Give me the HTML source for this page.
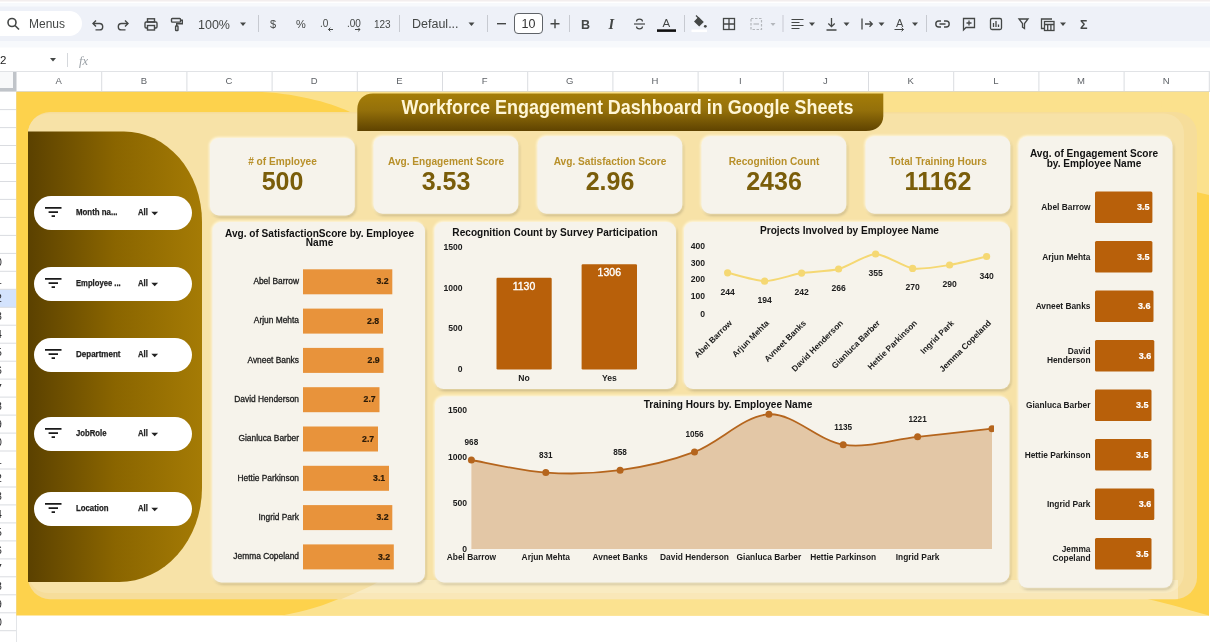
<!DOCTYPE html>
<html><head><meta charset="utf-8"><title>Workforce Engagement Dashboard</title>
<style>
html,body{margin:0;padding:0;background:#fff;}
body{width:1210px;height:642px;overflow:hidden;font-family:"Liberation Sans", Arial, sans-serif;}
svg{display:block;font-family:"Liberation Sans", Arial, sans-serif;will-change:transform;}
text{font-family:"Liberation Sans", Arial, sans-serif;}
.b{font-weight:bold;}
</style></head><body>
<svg width="1210" height="642" viewBox="0 0 1210 642">
<defs>
<linearGradient id="side" x1="0" y1="0" x2="1" y2="0"><stop offset="0" stop-color="#5b4100"/><stop offset="0.5" stop-color="#8a6500"/><stop offset="1" stop-color="#a57b05"/></linearGradient>
<linearGradient id="ttl" x1="0" y1="0" x2="0" y2="1"><stop offset="0" stop-color="#a57d08"/><stop offset="0.45" stop-color="#94700a"/><stop offset="1" stop-color="#5f4300"/></linearGradient>
<filter id="sh" x="-10%" y="-10%" width="120%" height="125%"><feGaussianBlur in="SourceAlpha" stdDeviation="1.800" result="bl"/><feOffset in="bl" dx="1" dy="2" result="o1"/><feComponentTransfer in="o1" result="dark"><feFuncA type="linear" slope="0.200"/></feComponentTransfer><feGaussianBlur in="SourceAlpha" stdDeviation="1" result="b2"/><feOffset in="b2" dx="-1.500" dy="-1" result="o2"/><feFlood flood-color="#fff8e0" result="fl"/><feComposite in="fl" in2="o2" operator="in" result="lite"/><feMerge><feMergeNode in="lite"/><feMergeNode in="dark"/><feMergeNode in="SourceGraphic"/></feMerge></filter>
<clipPath id="cpt"><rect x="460" y="400" width="534" height="170"/></clipPath>
</defs>

<rect x="0" y="0" width="1210" height="642" fill="#fff"/>
<rect x="0" y="0" width="1210" height="1.500" fill="#f3eeee"/>
<rect x="0" y="3" width="1210" height="44.500" fill="#f7f9fc"/>
<rect x="0" y="6.600" width="1210" height="34.400" fill="#eef1f8"/>
<rect x="-20" y="11" width="102" height="25" rx="12.5" fill="#fff"/>
<g fill="none" stroke="#444746" stroke-width="1.6"><circle cx="12" cy="22.5" r="4"/><path d="M15 25.5 L19 29.5"/></g>
<text x="29" y="27.800" font-size="12" fill="#444746">Menus</text>
<g fill="none" stroke="#444746" stroke-width="1.4" transform="translate(0,1)"><path d="M93 22.5h6.5a3.2 3.2 0 0 1 0 6.4h-4"/><path d="M96 19.5l-3 3 3 3"/><path d="M128 22.5h-6.500a3.200 3.200 0 0 0 0 6.400h4"/><path d="M125 19.500l3 3-3 3"/></g>
<g fill="none" stroke="#444746" stroke-width="1.4"><rect x="145" y="22" width="12" height="6" rx="1.2"/><rect x="147.500" y="18.800" width="7" height="3.200"/><rect x="147.500" y="25.500" width="7" height="4.500" fill="#eff2f9"/></g>
<g fill="none" stroke="#444746" stroke-width="1.4"><rect x="171.500" y="18.500" width="9" height="3.600" rx="0.800"/><path d="M180.500 20.300h1.800v3.400h-5.600v2.300"/><rect x="175.600" y="26" width="2.400" height="4.500" rx="0.600"/></g>
<text x="198" y="28.500" font-size="12.500" fill="#444746">100%</text>
<path d="M240 22.500h6l-3 3.500z" fill="#444746"/>
<rect x="258" y="15" width="1" height="17" fill="#c7cad1"/>
<text x="270" y="27.500" font-size="11" fill="#444746">$</text>
<text x="296" y="27.500" font-size="11" fill="#444746">%</text>
<text x="320" y="26.500" font-size="10" fill="#444746">.0</text><path d="M333 29.500h-4.500m1.800 -1.800l-1.800 1.800 1.800 1.800" stroke="#444746" stroke-width="1" fill="none"/>
<text x="347" y="26.500" font-size="10" fill="#444746">.00</text><path d="M355 29.500h5m-1.800 -1.800l1.800 1.800 -1.800 1.800" stroke="#444746" stroke-width="1" fill="none"/>
<text x="374" y="27.500" font-size="10" fill="#444746">123</text>
<rect x="399" y="15" width="1" height="17" fill="#c7cad1"/>
<text x="412" y="28" font-size="12.500" fill="#444746">Defaul...</text>
<path d="M468.500 22.500h6l-3 3.500z" fill="#444746"/>
<rect x="487" y="15" width="1" height="17" fill="#c7cad1"/>
<rect x="497" y="23" width="9" height="1.400" fill="#444746"/>
<rect x="514.500" y="13.500" width="28" height="20" rx="3.500" fill="#fff" stroke="#5f6368" stroke-width="1"/>
<text x="528.500" y="28" font-size="12.500" fill="#333" text-anchor="middle">10</text>
<path d="M550.500 23.700h9M555 19.200v9" stroke="#444746" stroke-width="1.400"/>
<rect x="569" y="15" width="1" height="17" fill="#c7cad1"/>
<text x="581" y="28.500" font-size="12.500" font-weight="bold" fill="#444746">B</text>
<text x="608.500" y="29" font-size="14.500" style="font-family:Liberation Serif,serif;font-style:italic;font-weight:bold" fill="#444746">I</text>
<g fill="none" stroke="#444746" stroke-width="1.200"><path d="M634 24h11"/><path d="M642.500 21.500a3 2.300 0 0 0 -6 0M636.500 26.500a3 2.300 0 0 0 6 0"/></g>
<text x="662.500" y="26.500" font-size="11.500" fill="#444746">A</text><rect x="657" y="29.300" width="19" height="2.600" fill="#111"/>
<rect x="684" y="15" width="1" height="17" fill="#c7cad1"/>
<path d="M698 16.200l5.800 5.800-4.600 4.600-5.200-5.200 4.600-4.600z" fill="#444746"/><path d="M696 15.500l2.500 2.500" stroke="#444746" stroke-width="1.300"/><circle cx="705.300" cy="26.300" r="1.400" fill="#444746"/><rect x="691.500" y="29.500" width="15.500" height="2.600" fill="#fff"/>
<g fill="none" stroke="#444746" stroke-width="1.300"><rect x="723.500" y="18.500" width="11" height="11"/><path d="M729 18.500v11M723.500 24h11"/></g>
<g fill="none" stroke="#b4b7bc" stroke-width="1.200"><rect x="751" y="18.500" width="10.500" height="11" stroke-dasharray="2.500 1.500"/><path d="M753.500 24h5.500"/></g><path d="M770.500 23h5l-2.500 3z" fill="#b4b7bc"/>
<rect x="782.500" y="15" width="1" height="17" fill="#c7cad1"/>
<path d="M791.500 19.500h12M791.500 22.500h8M791.500 25.500h12M791.500 28.500h8" stroke="#444746" stroke-width="1.200"/><path d="M809 22.500h6l-3 3.500z" fill="#444746"/>
<path d="M831.500 18v8.500M828.300 23.500l3.200 3.200 3.200-3.200M826.500 30h10" stroke="#444746" stroke-width="1.300" fill="none"/><path d="M843.500 22.500h6l-3 3.500z" fill="#444746"/>
<path d="M862 18.500v11M865 24h7M869.500 21.200l2.800 2.800-2.800 2.800" stroke="#444746" stroke-width="1.300" fill="none"/><path d="M878.500 22.500h6l-3 3.500z" fill="#444746"/>
<text x="896" y="27" font-size="11" fill="#444746">A</text><path d="M894.500 29.500h9m-2-1.800l2 1.800-2 1.800" stroke="#444746" stroke-width="1" fill="none"/><path d="M912 22.500h6l-3 3.500z" fill="#444746"/>
<rect x="926" y="15" width="1" height="17" fill="#c7cad1"/>
<g fill="none" stroke="#444746" stroke-width="1.400"><path d="M941 21h-2.200a3 3 0 0 0 0 6h2.200M944 21h2.200a3 3 0 0 1 0 6h-2.200M939.500 24h6"/></g>
<g fill="none" stroke="#444746" stroke-width="1.300"><path d="M963.500 18.500h11v9h-8.500l-2.500 2.500z"/><path d="M969 20.500v5M966.500 23h5"/></g>
<g fill="none" stroke="#444746" stroke-width="1.300"><rect x="990.500" y="18.500" width="11" height="11" rx="1.500"/><path d="M993.500 27v-4M996 27v-6M998.500 27v-2.500"/></g>
<path d="M1019 19h9l-3.500 4.500v5l-2 -1.300v-3.700z" fill="none" stroke="#444746" stroke-width="1.300"/>
<g fill="none" stroke="#444746" stroke-width="1.300"><path d="M1052 19h-10.500v9.500h3"/><rect x="1044.500" y="21.500" width="9.500" height="9"/><path d="M1044.500 24.500h9.500M1047.700 24.500v6M1050.900 24.500v6"/></g><path d="M1060 22.500h6l-3 3.500z" fill="#444746"/>
<text x="1080" y="28.500" font-size="12.500" font-weight="bold" fill="#444746">Σ</text>
<text x="0" y="63.500" font-size="11.500" fill="#222">2</text>
<path d="M50 58h6l-3 3.500z" fill="#444746"/>
<rect x="67" y="53" width="1" height="14" fill="#d5d8dc"/>
<text x="79" y="64.500" font-size="12.500" style="font-family:Liberation Serif,serif;font-style:italic" fill="#9aa0a6">fx</text>
<rect x="0" y="71" width="1210" height="1" fill="#e1e3e6"/>
<rect x="0" y="72" width="1210" height="19" fill="#fff"/>
<rect x="0" y="72" width="16" height="19" fill="#f8f9fa"/><rect x="13" y="72" width="3.500" height="19" fill="#c0c4c9"/><rect x="0" y="88" width="16" height="3.500" fill="#c0c4c9"/>
<rect x="0" y="91" width="1210" height="1" fill="#d9dbde"/>
<rect x="101.2" y="72" width="1" height="19" fill="#dadce0"/>
<text x="58.6" y="84.300" font-size="9.500" fill="#5f6368" text-anchor="middle">A</text>
<rect x="186.4" y="72" width="1" height="19" fill="#dadce0"/>
<text x="143.8" y="84.300" font-size="9.500" fill="#5f6368" text-anchor="middle">B</text>
<rect x="271.6" y="72" width="1" height="19" fill="#dadce0"/>
<text x="229.0" y="84.300" font-size="9.500" fill="#5f6368" text-anchor="middle">C</text>
<rect x="356.8" y="72" width="1" height="19" fill="#dadce0"/>
<text x="314.2" y="84.300" font-size="9.500" fill="#5f6368" text-anchor="middle">D</text>
<rect x="442.0" y="72" width="1" height="19" fill="#dadce0"/>
<text x="399.4" y="84.300" font-size="9.500" fill="#5f6368" text-anchor="middle">E</text>
<rect x="527.2" y="72" width="1" height="19" fill="#dadce0"/>
<text x="484.6" y="84.300" font-size="9.500" fill="#5f6368" text-anchor="middle">F</text>
<rect x="612.4" y="72" width="1" height="19" fill="#dadce0"/>
<text x="569.8" y="84.300" font-size="9.500" fill="#5f6368" text-anchor="middle">G</text>
<rect x="697.6" y="72" width="1" height="19" fill="#dadce0"/>
<text x="655.0" y="84.300" font-size="9.500" fill="#5f6368" text-anchor="middle">H</text>
<rect x="782.8" y="72" width="1" height="19" fill="#dadce0"/>
<text x="740.2" y="84.300" font-size="9.500" fill="#5f6368" text-anchor="middle">I</text>
<rect x="868.0" y="72" width="1" height="19" fill="#dadce0"/>
<text x="825.4" y="84.300" font-size="9.500" fill="#5f6368" text-anchor="middle">J</text>
<rect x="953.2" y="72" width="1" height="19" fill="#dadce0"/>
<text x="910.6" y="84.300" font-size="9.500" fill="#5f6368" text-anchor="middle">K</text>
<rect x="1038.4" y="72" width="1" height="19" fill="#dadce0"/>
<text x="995.8" y="84.300" font-size="9.500" fill="#5f6368" text-anchor="middle">L</text>
<rect x="1123.6" y="72" width="1" height="19" fill="#dadce0"/>
<text x="1081.0" y="84.300" font-size="9.500" fill="#5f6368" text-anchor="middle">M</text>
<rect x="1208.8" y="72" width="1" height="19" fill="#dadce0"/>
<text x="1166.2" y="84.300" font-size="9.500" fill="#5f6368" text-anchor="middle">N</text>
<rect x="0" y="92" width="16" height="550" fill="#fff"/>
<rect x="16" y="92" width="1" height="550" fill="#e3e5e8"/>
<rect x="0" y="289.300" width="16" height="18" fill="#d3e3fd"/>
<rect x="0" y="109.1" width="16" height="1" fill="#dadce0"/>
<rect x="0" y="127.1" width="16" height="1" fill="#dadce0"/>
<rect x="0" y="145.0" width="16" height="1" fill="#dadce0"/>
<rect x="0" y="163.0" width="16" height="1" fill="#dadce0"/>
<rect x="0" y="181.0" width="16" height="1" fill="#dadce0"/>
<rect x="0" y="198.9" width="16" height="1" fill="#dadce0"/>
<rect x="0" y="216.9" width="16" height="1" fill="#dadce0"/>
<rect x="0" y="234.9" width="16" height="1" fill="#dadce0"/>
<rect x="0" y="252.9" width="16" height="1" fill="#dadce0"/>
<rect x="0" y="270.8" width="16" height="1" fill="#dadce0"/>
<rect x="0" y="288.8" width="16" height="1" fill="#dadce0"/>
<rect x="0" y="306.8" width="16" height="1" fill="#dadce0"/>
<rect x="0" y="324.7" width="16" height="1" fill="#dadce0"/>
<rect x="0" y="342.7" width="16" height="1" fill="#dadce0"/>
<rect x="0" y="360.7" width="16" height="1" fill="#dadce0"/>
<rect x="0" y="378.6" width="16" height="1" fill="#dadce0"/>
<rect x="0" y="396.6" width="16" height="1" fill="#dadce0"/>
<rect x="0" y="414.6" width="16" height="1" fill="#dadce0"/>
<rect x="0" y="432.6" width="16" height="1" fill="#dadce0"/>
<rect x="0" y="450.5" width="16" height="1" fill="#dadce0"/>
<rect x="0" y="468.5" width="16" height="1" fill="#dadce0"/>
<rect x="0" y="486.5" width="16" height="1" fill="#dadce0"/>
<rect x="0" y="504.4" width="16" height="1" fill="#dadce0"/>
<rect x="0" y="522.4" width="16" height="1" fill="#dadce0"/>
<rect x="0" y="540.4" width="16" height="1" fill="#dadce0"/>
<rect x="0" y="558.4" width="16" height="1" fill="#dadce0"/>
<rect x="0" y="576.3" width="16" height="1" fill="#dadce0"/>
<rect x="0" y="594.3" width="16" height="1" fill="#dadce0"/>
<rect x="0" y="612.3" width="16" height="1" fill="#dadce0"/>
<rect x="0" y="630.2" width="16" height="1" fill="#dadce0"/>
<rect x="0" y="648.2" width="16" height="1" fill="#dadce0"/>
<text x="-3.800" y="266.3" font-size="10" fill="#202124">0</text>
<text x="-3.800" y="284.3" font-size="10" fill="#202124">1</text>
<text x="-3.800" y="302.3" font-size="10" fill="#202124">2</text>
<text x="-3.800" y="320.2" font-size="10" fill="#202124">3</text>
<text x="-3.800" y="338.2" font-size="10" fill="#202124">4</text>
<text x="-3.800" y="356.2" font-size="10" fill="#202124">5</text>
<text x="-3.800" y="374.1" font-size="10" fill="#202124">6</text>
<text x="-3.800" y="392.1" font-size="10" fill="#202124">7</text>
<text x="-3.800" y="410.1" font-size="10" fill="#202124">8</text>
<text x="-3.800" y="428.1" font-size="10" fill="#202124">9</text>
<text x="-3.800" y="446.0" font-size="10" fill="#202124">0</text>
<text x="-3.800" y="464.0" font-size="10" fill="#202124">1</text>
<text x="-3.800" y="482.0" font-size="10" fill="#202124">2</text>
<text x="-3.800" y="499.9" font-size="10" fill="#202124">3</text>
<text x="-3.800" y="517.9" font-size="10" fill="#202124">4</text>
<text x="-3.800" y="535.9" font-size="10" fill="#202124">5</text>
<text x="-3.800" y="553.9" font-size="10" fill="#202124">6</text>
<text x="-3.800" y="571.8" font-size="10" fill="#202124">7</text>
<text x="-3.800" y="589.8" font-size="10" fill="#202124">8</text>
<text x="-3.800" y="607.8" font-size="10" fill="#202124">9</text>
<text x="-3.800" y="625.7" font-size="10" fill="#202124">0</text>
<rect x="16.300" y="91.800" width="1192.700" height="523.700" fill="#fdd24c"/>
<path d="M262 92 C300 94 335 104 352 113 L1209 113 L1209 92 Z" fill="#fbe18d"/>
<path d="M1160 92 L1209 92 L1209 195 C1198 192 1186 190 1172 190 Z" fill="#fbe18d"/>
<path d="M282 615.500 C305 611 325 605.500 343 597 L1209 597 L1209 615.500 Z" fill="#fbe290"/>
<path d="M1138 597 C1160 601 1185 609 1209 615.500 L1209 597 Z" fill="#fdd24c"/>
<rect x="28" y="112" width="1169" height="487.200" rx="22" fill="#f6dd9a"/>
<rect x="28" y="113.500" width="1156" height="479.500" rx="20" fill="#f7e2a7"/>
<path d="M341 599.200 C355 593 368 588 382 580 L1178 580 L1178 599.200 Z" fill="#fff" fill-opacity="0.300"/>
<path d="M28 131.500 L124 131.500 A78 90 0 0 1 202 221.500 L202 488 A83 94 0 0 1 119 582 L28 582 Z" fill="url(#side)"/>
<rect x="34" y="196" width="158" height="34" rx="17" fill="#fff"/>
<path d="M45 207.9h16.500M48.600 212.1h9.400M51.600 216.2h3.400" stroke="#1a1a1a" stroke-width="1.800" fill="none"/>
<text x="76" y="214.6" font-size="8.800" class="b" fill="#222" stroke="#222" stroke-width="0.250" textLength="41.5" lengthAdjust="spacingAndGlyphs">Month na...</text>
<text x="138" y="214.6" font-size="8.800" class="b" fill="#222" stroke="#222" stroke-width="0.250" textLength="9.800" lengthAdjust="spacingAndGlyphs">All</text>
<path d="M151.300 211.7h6.800l-3.400 3.600z" fill="#222"/>
<rect x="34" y="267" width="158" height="34" rx="17" fill="#fff"/>
<path d="M45 278.9h16.500M48.600 283.1h9.400M51.600 287.2h3.400" stroke="#1a1a1a" stroke-width="1.800" fill="none"/>
<text x="76" y="285.6" font-size="8.800" class="b" fill="#222" stroke="#222" stroke-width="0.250" textLength="44.7" lengthAdjust="spacingAndGlyphs">Employee ...</text>
<text x="138" y="285.6" font-size="8.800" class="b" fill="#222" stroke="#222" stroke-width="0.250" textLength="9.800" lengthAdjust="spacingAndGlyphs">All</text>
<path d="M151.300 282.7h6.800l-3.400 3.600z" fill="#222"/>
<rect x="34" y="338" width="158" height="34" rx="17" fill="#fff"/>
<path d="M45 349.9h16.500M48.600 354.1h9.400M51.600 358.2h3.400" stroke="#1a1a1a" stroke-width="1.800" fill="none"/>
<text x="76" y="356.6" font-size="8.800" class="b" fill="#222" stroke="#222" stroke-width="0.250" textLength="44.5" lengthAdjust="spacingAndGlyphs">Department</text>
<text x="138" y="356.6" font-size="8.800" class="b" fill="#222" stroke="#222" stroke-width="0.250" textLength="9.800" lengthAdjust="spacingAndGlyphs">All</text>
<path d="M151.300 353.7h6.800l-3.400 3.600z" fill="#222"/>
<rect x="34" y="417" width="158" height="34" rx="17" fill="#fff"/>
<path d="M45 428.9h16.500M48.600 433.1h9.400M51.600 437.2h3.400" stroke="#1a1a1a" stroke-width="1.800" fill="none"/>
<text x="76" y="435.6" font-size="8.800" class="b" fill="#222" stroke="#222" stroke-width="0.250" textLength="30.5" lengthAdjust="spacingAndGlyphs">JobRole</text>
<text x="138" y="435.6" font-size="8.800" class="b" fill="#222" stroke="#222" stroke-width="0.250" textLength="9.800" lengthAdjust="spacingAndGlyphs">All</text>
<path d="M151.300 432.7h6.800l-3.400 3.600z" fill="#222"/>
<rect x="34" y="492" width="158" height="34" rx="17" fill="#fff"/>
<path d="M45 503.9h16.500M48.600 508.1h9.400M51.600 512.2h3.400" stroke="#1a1a1a" stroke-width="1.800" fill="none"/>
<text x="76" y="510.6" font-size="8.800" class="b" fill="#222" stroke="#222" stroke-width="0.250" textLength="32.5" lengthAdjust="spacingAndGlyphs">Location</text>
<text x="138" y="510.6" font-size="8.800" class="b" fill="#222" stroke="#222" stroke-width="0.250" textLength="9.800" lengthAdjust="spacingAndGlyphs">All</text>
<path d="M151.300 507.7h6.800l-3.400 3.600z" fill="#222"/>
<path d="M373 93.400 L883.300 93.400 L883.300 116 C883.300 125 876 131 866 131 L357.300 131 L357.300 109 C357.300 99.500 364 93.400 373 93.400 Z" fill="url(#ttl)"/>
<text x="627.500" y="114.400" font-size="21" class="b" fill="#fff6d6" text-anchor="middle" textLength="452" lengthAdjust="spacingAndGlyphs">Workforce Engagement Dashboard in Google Sheets</text>
<rect x="210.0" y="138.0" width="144.800" height="77.400" rx="9" fill="#f6f3eb" filter="url(#sh)"/>
<text x="282.5" y="164.800" font-size="10.150" class="b" fill="#b8902a" text-anchor="middle"># of Employee</text>
<text x="282.5" y="189.800" font-size="25" class="b" fill="#7a5d0a" text-anchor="middle">500</text>
<rect x="373.5" y="136.3" width="144.800" height="77.400" rx="9" fill="#f6f3eb" filter="url(#sh)"/>
<text x="446.0" y="164.800" font-size="10.150" class="b" fill="#b8902a" text-anchor="middle">Avg. Engagement Score</text>
<text x="446.0" y="189.800" font-size="25" class="b" fill="#7a5d0a" text-anchor="middle">3.53</text>
<rect x="537.5" y="136.3" width="144.800" height="77.400" rx="9" fill="#f6f3eb" filter="url(#sh)"/>
<text x="610.0" y="164.800" font-size="10.150" class="b" fill="#b8902a" text-anchor="middle">Avg. Satisfaction Score</text>
<text x="610.0" y="189.800" font-size="25" class="b" fill="#7a5d0a" text-anchor="middle">2.96</text>
<rect x="701.5" y="136.3" width="144.800" height="77.400" rx="9" fill="#f6f3eb" filter="url(#sh)"/>
<text x="774.0" y="164.800" font-size="10.150" class="b" fill="#b8902a" text-anchor="middle">Recognition Count</text>
<text x="774.0" y="189.800" font-size="25" class="b" fill="#7a5d0a" text-anchor="middle">2436</text>
<rect x="865.5" y="136.3" width="144.800" height="77.400" rx="9" fill="#f6f3eb" filter="url(#sh)"/>
<text x="938.0" y="164.800" font-size="10.150" class="b" fill="#b8902a" text-anchor="middle">Total Training Hours</text>
<text x="938.0" y="189.800" font-size="25" class="b" fill="#7a5d0a" text-anchor="middle">11162</text>
<rect x="212.500" y="222" width="212.500" height="360.500" rx="9" fill="#f6f3eb" filter="url(#sh)"/>
<text x="319.500" y="236.800" font-size="10.100" class="b" fill="#111" text-anchor="middle">Avg. of SatisfactionScore by. Employee</text>
<text x="319.500" y="246.300" font-size="10.100" class="b" fill="#111" text-anchor="middle">Name</text>
<rect x="303" y="269.3" width="89.3" height="25" fill="#e8933b"/>
<text x="299" y="284.0" font-size="8.400" fill="#1c1c1c" text-anchor="end" stroke="#1c1c1c" stroke-width="0.300">Abel Barrow</text>
<text x="388.5" y="284.4" font-size="8.700" class="b" fill="#2a1a08" stroke="#2a1a08" stroke-width="0.200" text-anchor="end">3.2</text>
<rect x="303" y="308.6" width="80.0" height="25" fill="#e8933b"/>
<text x="299" y="323.3" font-size="8.400" fill="#1c1c1c" text-anchor="end" stroke="#1c1c1c" stroke-width="0.300">Arjun Mehta</text>
<text x="379.2" y="323.7" font-size="8.700" class="b" fill="#2a1a08" stroke="#2a1a08" stroke-width="0.200" text-anchor="end">2.8</text>
<rect x="303" y="347.9" width="80.5" height="25" fill="#e8933b"/>
<text x="299" y="362.6" font-size="8.400" fill="#1c1c1c" text-anchor="end" stroke="#1c1c1c" stroke-width="0.300">Avneet Banks</text>
<text x="379.7" y="363.0" font-size="8.700" class="b" fill="#2a1a08" stroke="#2a1a08" stroke-width="0.200" text-anchor="end">2.9</text>
<rect x="303" y="387.2" width="76.5" height="25" fill="#e8933b"/>
<text x="299" y="401.9" font-size="8.400" fill="#1c1c1c" text-anchor="end" stroke="#1c1c1c" stroke-width="0.300">David Henderson</text>
<text x="375.7" y="402.3" font-size="8.700" class="b" fill="#2a1a08" stroke="#2a1a08" stroke-width="0.200" text-anchor="end">2.7</text>
<rect x="303" y="426.5" width="75.0" height="25" fill="#e8933b"/>
<text x="299" y="441.2" font-size="8.400" fill="#1c1c1c" text-anchor="end" stroke="#1c1c1c" stroke-width="0.300">Gianluca Barber</text>
<text x="374.2" y="441.6" font-size="8.700" class="b" fill="#2a1a08" stroke="#2a1a08" stroke-width="0.200" text-anchor="end">2.7</text>
<rect x="303" y="465.8" width="86.0" height="25" fill="#e8933b"/>
<text x="299" y="480.5" font-size="8.400" fill="#1c1c1c" text-anchor="end" stroke="#1c1c1c" stroke-width="0.300">Hettie Parkinson</text>
<text x="385.2" y="480.9" font-size="8.700" class="b" fill="#2a1a08" stroke="#2a1a08" stroke-width="0.200" text-anchor="end">3.1</text>
<rect x="303" y="505.1" width="89.3" height="25" fill="#e8933b"/>
<text x="299" y="519.8" font-size="8.400" fill="#1c1c1c" text-anchor="end" stroke="#1c1c1c" stroke-width="0.300">Ingrid Park</text>
<text x="388.5" y="520.2" font-size="8.700" class="b" fill="#2a1a08" stroke="#2a1a08" stroke-width="0.200" text-anchor="end">3.2</text>
<rect x="303" y="544.4" width="90.8" height="25" fill="#e8933b"/>
<text x="299" y="559.1" font-size="8.400" fill="#1c1c1c" text-anchor="end" stroke="#1c1c1c" stroke-width="0.300">Jemma Copeland</text>
<text x="390.0" y="559.5" font-size="8.700" class="b" fill="#2a1a08" stroke="#2a1a08" stroke-width="0.200" text-anchor="end">3.2</text>
<rect x="434.500" y="222" width="241.500" height="167" rx="9" fill="#f6f3eb" filter="url(#sh)"/>
<text x="555" y="235.800" font-size="10.100" class="b" fill="#111" text-anchor="middle">Recognition Count by Survey Participation</text>
<text x="462.500" y="250.1" font-size="8.600" class="b" fill="#1c1c1c" text-anchor="end">1500</text>
<text x="462.500" y="291.0" font-size="8.600" class="b" fill="#1c1c1c" text-anchor="end">1000</text>
<text x="462.500" y="331.0" font-size="8.600" class="b" fill="#1c1c1c" text-anchor="end">500</text>
<text x="462.500" y="371.5" font-size="8.600" class="b" fill="#1c1c1c" text-anchor="end">0</text>
<rect x="496.500" y="277.800" width="55.200" height="91.600" rx="1.200" fill="#b8600a"/>
<rect x="581.600" y="264.200" width="55.400" height="105.200" rx="1.200" fill="#b8600a"/>
<text x="524" y="289.500" font-size="10.500" fill="#fff" stroke="#fff" stroke-width="0.350" text-anchor="middle">1130</text>
<text x="609.300" y="275.600" font-size="10.500" fill="#fff" stroke="#fff" stroke-width="0.350" text-anchor="middle">1306</text>
<text x="524" y="381" font-size="8.600" class="b" fill="#1c1c1c" text-anchor="middle">No</text>
<text x="609.300" y="381" font-size="8.600" class="b" fill="#1c1c1c" text-anchor="middle">Yes</text>
<rect x="684" y="222" width="326" height="167" rx="9" fill="#f6f3eb" filter="url(#sh)"/>
<text x="849.500" y="234.300" font-size="10.100" class="b" fill="#111" text-anchor="middle">Projects Involved by Employee Name</text>
<text x="705" y="248.9" font-size="8.600" class="b" fill="#1c1c1c" text-anchor="end">400</text>
<text x="705" y="265.5" font-size="8.600" class="b" fill="#1c1c1c" text-anchor="end">300</text>
<text x="705" y="282.3" font-size="8.600" class="b" fill="#1c1c1c" text-anchor="end">200</text>
<text x="705" y="299.4" font-size="8.600" class="b" fill="#1c1c1c" text-anchor="end">100</text>
<text x="705" y="316.5" font-size="8.600" class="b" fill="#1c1c1c" text-anchor="end">0</text>
<path d="M727.6,272.8 C731.9,273.7 756.0,281.2 764.6,281.2 C773.2,281.3 793.0,274.5 801.6,273.1 C810.2,271.7 830.0,271.3 838.6,269.0 C847.2,266.8 867.0,254.1 875.6,254.0 C884.2,253.9 904.0,267.1 912.6,268.4 C921.2,269.7 941.0,266.4 949.6,265.0 C958.2,263.6 982.3,257.5 986.6,256.5" fill="none" stroke="#f5d873" stroke-width="2"/>
<circle cx="727.6" cy="272.8" r="3.600" fill="#f5d873"/>
<text x="727.6" y="294.8" font-size="8.600" class="b" fill="#1c1c1c" text-anchor="middle">244</text>
<text transform="translate(732.6,323.6) rotate(-45)" font-size="8.350" class="b" fill="#1c1c1c" text-anchor="end">Abel Barrow</text>
<circle cx="764.6" cy="281.2" r="3.600" fill="#f5d873"/>
<text x="764.6" y="303.2" font-size="8.600" class="b" fill="#1c1c1c" text-anchor="middle">194</text>
<text transform="translate(769.6,323.6) rotate(-45)" font-size="8.350" class="b" fill="#1c1c1c" text-anchor="end">Arjun Mehta</text>
<circle cx="801.6" cy="273.1" r="3.600" fill="#f5d873"/>
<text x="801.6" y="295.1" font-size="8.600" class="b" fill="#1c1c1c" text-anchor="middle">242</text>
<text transform="translate(806.6,323.6) rotate(-45)" font-size="8.350" class="b" fill="#1c1c1c" text-anchor="end">Avneet Banks</text>
<circle cx="838.6" cy="269.0" r="3.600" fill="#f5d873"/>
<text x="838.6" y="291.0" font-size="8.600" class="b" fill="#1c1c1c" text-anchor="middle">266</text>
<text transform="translate(843.6,323.6) rotate(-45)" font-size="8.350" class="b" fill="#1c1c1c" text-anchor="end">David Henderson</text>
<circle cx="875.6" cy="254.0" r="3.600" fill="#f5d873"/>
<text x="875.6" y="276.0" font-size="8.600" class="b" fill="#1c1c1c" text-anchor="middle">355</text>
<text transform="translate(880.6,323.6) rotate(-45)" font-size="8.350" class="b" fill="#1c1c1c" text-anchor="end">Gianluca Barber</text>
<circle cx="912.6" cy="268.4" r="3.600" fill="#f5d873"/>
<text x="912.6" y="290.4" font-size="8.600" class="b" fill="#1c1c1c" text-anchor="middle">270</text>
<text transform="translate(917.6,323.6) rotate(-45)" font-size="8.350" class="b" fill="#1c1c1c" text-anchor="end">Hettie Parkinson</text>
<circle cx="949.6" cy="265.0" r="3.600" fill="#f5d873"/>
<text x="949.6" y="287.0" font-size="8.600" class="b" fill="#1c1c1c" text-anchor="middle">290</text>
<text transform="translate(954.6,323.6) rotate(-45)" font-size="8.350" class="b" fill="#1c1c1c" text-anchor="end">Ingrid Park</text>
<circle cx="986.6" cy="256.5" r="3.600" fill="#f5d873"/>
<text x="986.6" y="278.5" font-size="8.600" class="b" fill="#1c1c1c" text-anchor="middle">340</text>
<text transform="translate(991.6,323.6) rotate(-45)" font-size="8.350" class="b" fill="#1c1c1c" text-anchor="end">Jemma Copeland</text>
<rect x="435" y="396.500" width="574.500" height="186" rx="9" fill="#f6f3eb" filter="url(#sh)"/>
<text x="728" y="407.500" font-size="10.100" class="b" fill="#111" text-anchor="middle">Training Hours by. Employee Name</text>
<text x="467" y="413.1" font-size="8.600" class="b" fill="#1c1c1c" text-anchor="end">1500</text>
<text x="467" y="459.7" font-size="8.600" class="b" fill="#1c1c1c" text-anchor="end">1000</text>
<text x="467" y="505.8" font-size="8.600" class="b" fill="#1c1c1c" text-anchor="end">500</text>
<text x="467" y="552.4" font-size="8.600" class="b" fill="#1c1c1c" text-anchor="end">0</text>
<path d="M471.4,460.0 C483.8,462.1 521.0,471.0 545.8,472.6 C570.6,474.3 595.4,473.6 620.1,470.2 C644.9,466.7 669.7,461.3 694.5,451.9 C719.3,442.6 744.1,415.5 768.9,414.3 C793.7,413.1 818.5,440.9 843.2,444.7 C868.0,448.4 892.8,439.4 917.6,436.8 C942.4,434.1 979.6,430.0 992.0,428.7 L992,549.100 L471.400,549.100 Z" fill="#e3c7a6"/>
<path d="M471.4,460.0 C483.8,462.1 521.0,471.0 545.8,472.6 C570.6,474.3 595.4,473.6 620.1,470.2 C644.9,466.7 669.7,461.3 694.5,451.9 C719.3,442.6 744.1,415.5 768.9,414.3 C793.7,413.1 818.5,440.9 843.2,444.7 C868.0,448.4 892.8,439.4 917.6,436.8 C942.4,434.1 979.6,430.0 992.0,428.7" fill="none" stroke="#b5651d" stroke-width="1.800"/>
<circle cx="471.4" cy="460.0" r="3.500" fill="#b5651d" clip-path="url(#cpt)"/>
<text x="471.4" y="445.0" font-size="8.200" class="b" fill="#1c1c1c" text-anchor="middle">968</text>
<text x="471.4" y="560.3" font-size="8.400" class="b" fill="#1c1c1c" text-anchor="middle">Abel Barrow</text>
<circle cx="545.8" cy="472.6" r="3.500" fill="#b5651d" clip-path="url(#cpt)"/>
<text x="545.8" y="457.6" font-size="8.200" class="b" fill="#1c1c1c" text-anchor="middle">831</text>
<text x="545.8" y="560.3" font-size="8.400" class="b" fill="#1c1c1c" text-anchor="middle">Arjun Mehta</text>
<circle cx="620.1" cy="470.2" r="3.500" fill="#b5651d" clip-path="url(#cpt)"/>
<text x="620.1" y="455.2" font-size="8.200" class="b" fill="#1c1c1c" text-anchor="middle">858</text>
<text x="620.1" y="560.3" font-size="8.400" class="b" fill="#1c1c1c" text-anchor="middle">Avneet Banks</text>
<circle cx="694.5" cy="451.9" r="3.500" fill="#b5651d" clip-path="url(#cpt)"/>
<text x="694.5" y="436.9" font-size="8.200" class="b" fill="#1c1c1c" text-anchor="middle">1056</text>
<text x="694.5" y="560.3" font-size="8.400" class="b" fill="#1c1c1c" text-anchor="middle">David Henderson</text>
<circle cx="768.9" cy="414.3" r="3.500" fill="#b5651d" clip-path="url(#cpt)"/>
<text x="768.9" y="560.3" font-size="8.400" class="b" fill="#1c1c1c" text-anchor="middle">Gianluca Barber</text>
<circle cx="843.2" cy="444.7" r="3.500" fill="#b5651d" clip-path="url(#cpt)"/>
<text x="843.2" y="429.7" font-size="8.200" class="b" fill="#1c1c1c" text-anchor="middle">1135</text>
<text x="843.2" y="560.3" font-size="8.400" class="b" fill="#1c1c1c" text-anchor="middle">Hettie Parkinson</text>
<circle cx="917.6" cy="436.8" r="3.500" fill="#b5651d" clip-path="url(#cpt)"/>
<text x="917.6" y="421.8" font-size="8.200" class="b" fill="#1c1c1c" text-anchor="middle">1221</text>
<text x="917.6" y="560.3" font-size="8.400" class="b" fill="#1c1c1c" text-anchor="middle">Ingrid Park</text>
<circle cx="992.0" cy="428.7" r="3.500" fill="#b5651d" clip-path="url(#cpt)"/>
<rect x="1018.500" y="136.500" width="154" height="451.300" rx="9" fill="#f6f3eb" filter="url(#sh)"/>
<text x="1094" y="157" font-size="10.100" class="b" fill="#111" text-anchor="middle">Avg. of Engagement Score</text>
<text x="1094" y="167" font-size="10.100" class="b" fill="#111" text-anchor="middle">by. Employee Name</text>
<rect x="1095" y="191.4" width="57.4" height="31.500" rx="1.500" fill="#b8600a"/>
<text x="1090.500" y="210.2" font-size="8.350" class="b" fill="#1c1c1c" text-anchor="end">Abel Barrow</text>
<text x="1149.4" y="210.1" font-size="9" class="b" fill="#fff" stroke="#fff" stroke-width="0.200" text-anchor="end">3.5</text>
<rect x="1095" y="240.9" width="57.4" height="31.500" rx="1.500" fill="#b8600a"/>
<text x="1090.500" y="259.7" font-size="8.350" class="b" fill="#1c1c1c" text-anchor="end">Arjun Mehta</text>
<text x="1149.4" y="259.6" font-size="9" class="b" fill="#fff" stroke="#fff" stroke-width="0.200" text-anchor="end">3.5</text>
<rect x="1095" y="290.4" width="58.5" height="31.500" rx="1.500" fill="#b8600a"/>
<text x="1090.500" y="309.2" font-size="8.350" class="b" fill="#1c1c1c" text-anchor="end">Avneet Banks</text>
<text x="1150.5" y="309.1" font-size="9" class="b" fill="#fff" stroke="#fff" stroke-width="0.200" text-anchor="end">3.6</text>
<rect x="1095" y="340.0" width="59.3" height="31.500" rx="1.500" fill="#b8600a"/>
<text x="1090.500" y="353.9" font-size="8.350" class="b" fill="#1c1c1c" text-anchor="end">David</text>
<text x="1090.500" y="362.7" font-size="8.350" class="b" fill="#1c1c1c" text-anchor="end">Henderson</text>
<text x="1151.3" y="358.6" font-size="9" class="b" fill="#fff" stroke="#fff" stroke-width="0.200" text-anchor="end">3.6</text>
<rect x="1095" y="389.5" width="56.5" height="31.500" rx="1.500" fill="#b8600a"/>
<text x="1090.500" y="408.2" font-size="8.350" class="b" fill="#1c1c1c" text-anchor="end">Gianluca Barber</text>
<text x="1148.5" y="408.1" font-size="9" class="b" fill="#fff" stroke="#fff" stroke-width="0.200" text-anchor="end">3.5</text>
<rect x="1095" y="439.0" width="56.5" height="31.500" rx="1.500" fill="#b8600a"/>
<text x="1090.500" y="457.8" font-size="8.350" class="b" fill="#1c1c1c" text-anchor="end">Hettie Parkinson</text>
<text x="1148.5" y="457.6" font-size="9" class="b" fill="#fff" stroke="#fff" stroke-width="0.200" text-anchor="end">3.5</text>
<rect x="1095" y="488.5" width="59.3" height="31.500" rx="1.500" fill="#b8600a"/>
<text x="1090.500" y="507.3" font-size="8.350" class="b" fill="#1c1c1c" text-anchor="end">Ingrid Park</text>
<text x="1151.3" y="507.2" font-size="9" class="b" fill="#fff" stroke="#fff" stroke-width="0.200" text-anchor="end">3.6</text>
<rect x="1095" y="538.0" width="56.5" height="31.500" rx="1.500" fill="#b8600a"/>
<text x="1090.500" y="552.0" font-size="8.350" class="b" fill="#1c1c1c" text-anchor="end">Jemma</text>
<text x="1090.500" y="560.8" font-size="8.350" class="b" fill="#1c1c1c" text-anchor="end">Copeland</text>
<text x="1148.5" y="556.7" font-size="9" class="b" fill="#fff" stroke="#fff" stroke-width="0.200" text-anchor="end">3.5</text>
</svg></body></html>
